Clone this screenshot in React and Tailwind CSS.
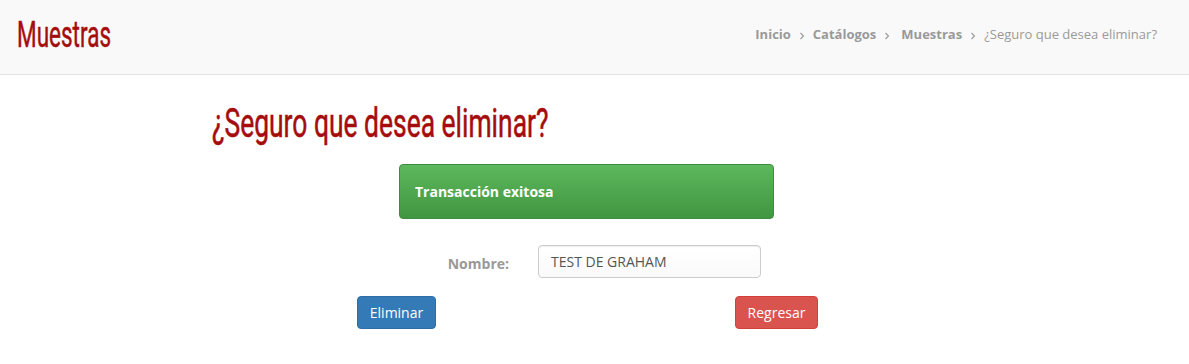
export default function App() {
  const cond = { fontFamily: 'Roboto, "DejaVu Sans", sans-serif' };
  const Sep = ({ className = "" }) => (
    <svg className={"w-[6px] h-[8px] " + className} viewBox="0 0 6 8" fill="none" stroke="#999" strokeWidth="1.1">
      <path d="M1.5 1l3 3-3 3" />
    </svg>
  );
  return (
    <div className="min-h-[364px] bg-white" style={{ fontFamily: '"Open Sans", "Noto Sans", sans-serif' }}>
      <header className="h-[75px] bg-[#f9f9f9] border-b border-[#e2e2e2] flex items-center justify-between pl-[17px] pr-[32px]">
        <h1
          className="inline-block whitespace-nowrap text-[30px] font-normal text-[#a50d0d] leading-none mt-[-4px] origin-left scale-x-[0.75] scale-y-[1.2] [-webkit-text-stroke:0.4px_#a50d0d]"
          style={cond}
        >
          Muestras
        </h1>
        <nav className="flex items-center text-[13px] text-[#999] mt-[-4px]">
          <span className="font-bold">Inicio</span>
          <Sep className="mx-[8px] mt-[2px]" />
          <span className="font-bold">Catálogos</span>
          <Sep className="ml-[8px] mr-[11px] mt-[2px]" />
          <span className="font-bold">Muestras</span>
          <Sep className="mx-[8px] mt-[2px]" />
          <span>¿Seguro que desea eliminar?</span>
        </nav>
      </header>

      <main className="pt-[28px]">
        <h2
          className="ml-[212px] inline-block whitespace-nowrap text-[36px] leading-[40px] font-normal text-[#a50d0d] origin-left scale-x-[0.734] scale-y-[1.14] [-webkit-text-stroke:0.5px_#a50d0d]"
          style={cond}
        >
          ¿Seguro que desea eliminar?
        </h2>

        <div className="ml-[399px] mt-[21px] w-[375px] h-[55px] rounded-[4px] border border-[#3d8b3d] bg-gradient-to-b from-[#5cb85c] to-[#419641] flex items-center pl-[15px]">
          <span className="text-white font-bold text-[14px]">Transacción exitosa</span>
        </div>

        <div className="flex items-center mt-[26px]">
          <label className="w-[509px] text-right text-[14px] font-bold text-[#999] pt-[4px]">Nombre:</label>
          <div className="ml-[29px] w-[223px] h-[33px] border border-[#ccc] rounded-[4px] bg-gradient-to-b from-white to-[#fafafa] shadow-[inset_0_1px_1px_rgba(0,0,0,0.075)] flex items-center pl-[12px] text-[14px] text-[#555]">
            TEST DE GRAHAM
          </div>
        </div>

        <div className="flex items-center mt-[18px] ml-[357px] w-[461px] justify-between">
          <button className="w-[79px] h-[33px] rounded-[4px] bg-[#337ab7] border border-[#2e6da4] text-white text-[14px]">
            Eliminar
          </button>
          <button className="w-[83px] h-[33px] rounded-[4px] bg-[#d9534f] border border-[#d43f3a] text-white text-[14px]">
            Regresar
          </button>
        </div>
      </main>
    </div>
  );
}
